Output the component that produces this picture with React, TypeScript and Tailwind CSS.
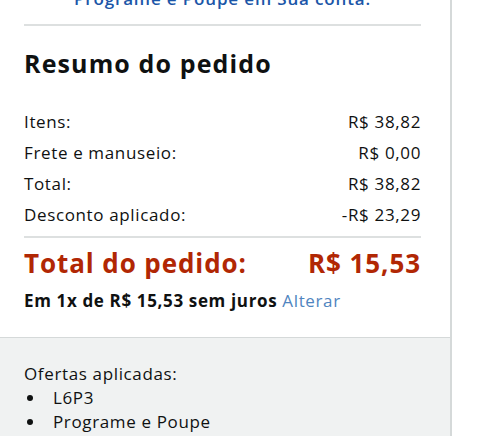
const rows = [
  { label: 'Itens:', value: 'R$ 38,82' },
  { label: 'Frete e manuseio:', value: 'R$ 0,00' },
  { label: 'Total:', value: 'R$ 38,82' },
  { label: 'Desconto aplicado:', value: '-R$ 23,29' },
];

const offers = ['L6P3', 'Programe e Poupe'];

const App = () => {
  return (
    <div className="h-[436px] w-[500px] overflow-hidden bg-white font-['Open_Sans',sans-serif] tracking-[0.04em] text-[#0F1111]">
      <div className="w-[452px] border-r-2 border-[#D5D9D9]">
        {/* Resumo */}
        <div className="pl-[24px] pr-[29px] pb-[25px]">
          <p className="mt-[-13px] text-center text-[17px] font-semibold leading-[24px] tracking-[0.05em] text-[#1B56A8]">
            Programe e Poupe em Sua conta.
          </p>
          <div className="mt-[13px] h-[2px] bg-[#DDE0E0]" />

          <h2 className="mt-[21px] text-[25px] font-bold leading-[32px] tracking-[0.045em]">
            Resumo do pedido
          </h2>

          <div className="mt-[27px]">
            {rows.map((row) => (
              <div key={row.label} className="flex justify-between text-[17px] leading-[31px]">
                <span>{row.label}</span>
                <span>{row.value}</span>
              </div>
            ))}
          </div>

          <div className="mt-[6px] h-[2px] bg-[#DDE0E0]" />

          <div className="mt-[9px] flex justify-between text-[26px] font-bold leading-[32px] tracking-[0.035em] text-[#B12704]">
            <span>Total do pedido:</span>
            <span>R$ 15,53</span>
          </div>

          <p className="mt-[11px] text-[17px] font-bold leading-[22px]">
            Em 1x de R$ 15,53 sem juros{' '}
            <a href="#" className="font-normal text-[#4F85C0]">
              Alterar
            </a>
          </p>
        </div>

        {/* Ofertas */}
        <div className="h-[120px] border-t border-[#D5D9D9] bg-[#F0F2F2] pl-[24px] pt-[24px]">
          <p className="text-[17px] leading-[24px]">Ofertas aplicadas:</p>
          <ul className="text-[17px] leading-[24px]">
            {offers.map((offer) => (
              <li key={offer} className="flex items-center">
                <span className="ml-[3px] h-[6px] w-[6px] rounded-full bg-[#0F1111]" />
                <span className="ml-[20px]">{offer}</span>
              </li>
            ))}
          </ul>
        </div>
      </div>
    </div>
  );
};

export default App;
